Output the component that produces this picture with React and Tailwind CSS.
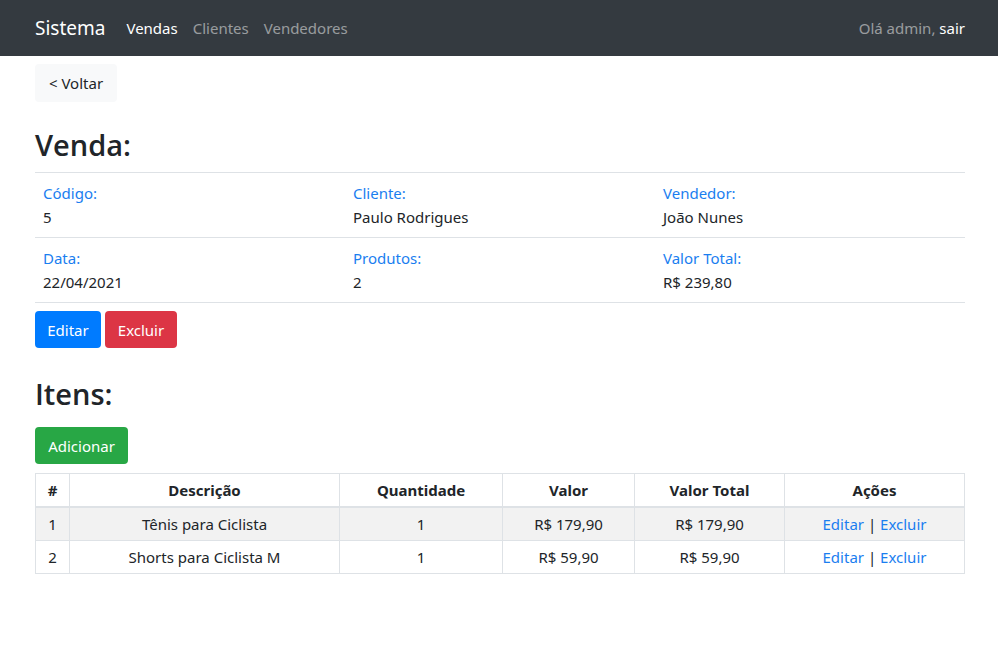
export default function App() {
  const font = { fontFamily: '"Noto Sans", "Open Sans", sans-serif' };
  const hfont = { fontFamily: '"Open Sans", "Noto Sans", sans-serif' };
  const rows = [
    { n: 1, d: "Tênis para Ciclista", q: 1, v: "R$ 179,90", t: "R$ 179,90" },
    { n: 2, d: "Shorts para Ciclista M", q: 1, v: "R$ 59,90", t: "R$ 59,90" },
  ];
  const info = [
    [
      ["Código:", "5"],
      ["Cliente:", "Paulo Rodrigues"],
      ["Vendedor:", "João Nunes"],
    ],
    [
      ["Data:", "22/04/2021"],
      ["Produtos:", "2"],
      ["Valor Total:", "R$ 239,80"],
    ],
  ];
  return (
    <div className="min-h-screen bg-white text-[#212529] text-[15px] leading-[24px]" style={font}>
      <nav className="h-[56px] bg-[#343a40] flex items-center">
        <div className="w-[930px] ml-[35px] flex items-center">
          <span className="text-white text-[19px] mr-[21px] leading-[30px]">Sistema</span>
          <div className="flex">
            <span className="text-white pr-[15px]">Vendas</span>
            <span className="text-[rgba(255,255,255,0.5)] pr-[15px]">Clientes</span>
            <span className="text-[rgba(255,255,255,0.5)]">Vendedores</span>
          </div>
          <div className="ml-auto">
            <span className="text-[rgba(255,255,255,0.5)]">Olá admin, </span>
            <span className="text-white">sair</span>
          </div>
        </div>
      </nav>
      <div className="w-[930px] ml-[35px]">
        <div className="mt-[8px]">
          <button className="bg-[#f8f9fa] rounded-[4px] h-[38px] w-[82px] text-[#212529]">&lt; Voltar</button>
        </div>
        <h2 className="text-[29px] font-semibold leading-[38px] mt-[24px] mb-[8px]" style={hfont}>Venda:</h2>
        <div className="border-t border-[#dee2e6]">
          {info.map((r, i) => (
            <div key={i} className="grid grid-cols-3 border-b border-[#dee2e6] py-[8px]">
              {r.map(([l, v]) => (
                <div key={l} className="px-[8px]">
                  <div className="text-[#1a7ef0]">{l}</div>
                  <div>{v}</div>
                </div>
              ))}
            </div>
          ))}
        </div>
        <div className="flex gap-[4px] mt-[8px]">
          <button className="bg-[#007bff] text-white rounded-[4px] h-[37px] w-[66px]">Editar</button>
          <button className="bg-[#dc3545] text-white rounded-[4px] h-[37px] w-[72px]">Excluir</button>
        </div>
        <h2 className="text-[29px] font-semibold leading-[38px] mt-[27px] mb-[14px]" style={hfont}>Itens:</h2>
        <button className="bg-[#28a745] text-white rounded-[4px] h-[37px] w-[93px]">Adicionar</button>
        <table className="w-full mt-[9px] border-collapse text-center">
          <colgroup>
            <col className="w-[34px]" />
            <col className="w-[270px]" />
            <col className="w-[163px]" />
            <col className="w-[132px]" />
            <col className="w-[150px]" />
            <col />
          </colgroup>
          <thead>
            <tr className="h-[33px]">
              {["#", "Descrição", "Quantidade", "Valor", "Valor Total", "Ações"].map((h) => (
                <th key={h} className="border border-[#dee2e6] border-b-2 font-bold px-[5px] py-[3px]">{h}</th>
              ))}
            </tr>
          </thead>
          <tbody>
            {rows.map((r, i) => (
              <tr key={r.n} className={i === 0 ? "bg-[#f2f2f2] h-[33px]" : "h-[33px]"}>
                <td className="border border-[#dee2e6] px-[5px] py-[4px]">{r.n}</td>
                <td className="border border-[#dee2e6] px-[5px] py-[4px]">{r.d}</td>
                <td className="border border-[#dee2e6] px-[5px] py-[4px]">{r.q}</td>
                <td className="border border-[#dee2e6] px-[5px] py-[4px]">{r.v}</td>
                <td className="border border-[#dee2e6] px-[5px] py-[4px]">{r.t}</td>
                <td className="border border-[#dee2e6] px-[5px] py-[4px]">
                  <span className="text-[#1a7ef0]">Editar</span> | <span className="text-[#1a7ef0]">Excluir</span>
                </td>
              </tr>
            ))}
          </tbody>
        </table>
      </div>
    </div>
  );
}
